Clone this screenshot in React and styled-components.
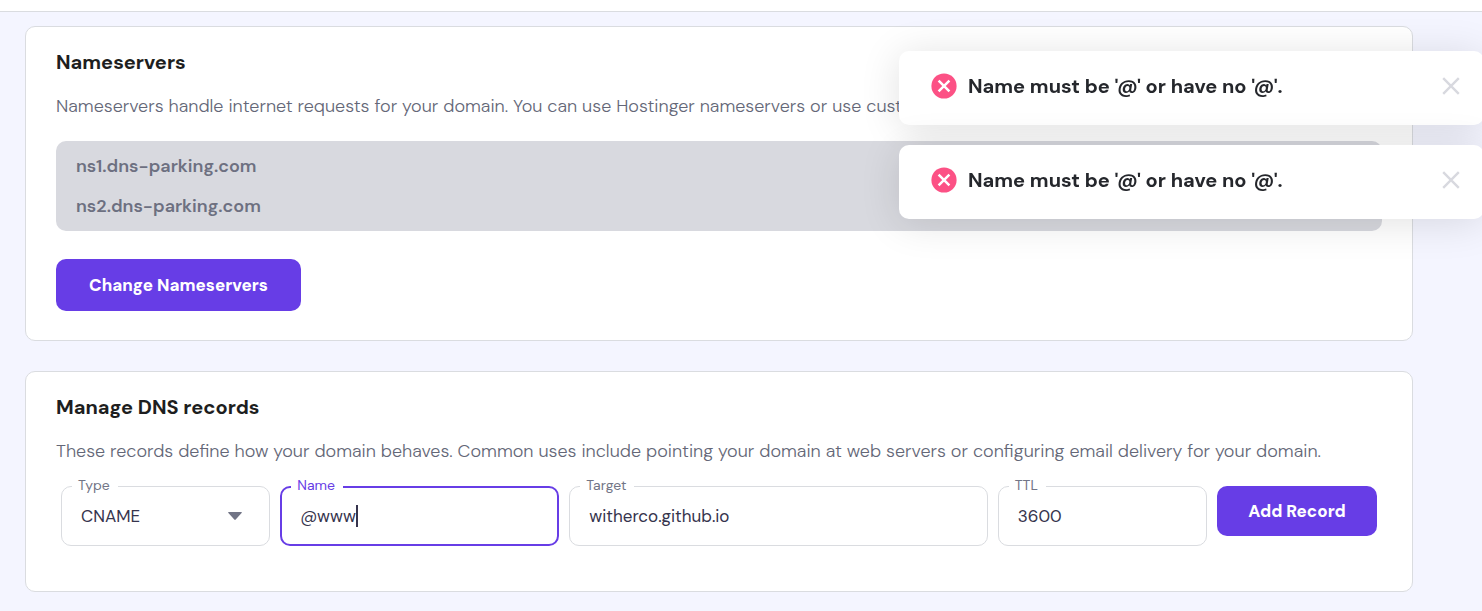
import React from "react";
import styled, { createGlobalStyle } from "styled-components";

const GlobalStyle = createGlobalStyle`
  *, *::before, *::after { box-sizing: border-box; }
  body {
    margin: 0;
    background: #f4f5ff;
    color: #1d1e20;
    font-family: "DM Sans", Inter, "Liberation Sans", sans-serif;
    font-size: 17px;
    overflow-x: hidden;
  }
  button, input, select { font: inherit; color: inherit; }
`;

const TopBar = styled.header`
  height: 12px;
  background: #fff;
  border-bottom: 1px solid #dadce0;
`;

const Page = styled.main`
  display: flex;
  flex-direction: column;
  gap: 30px;
  padding: 14px 69px 19px 25px;
`;

const Card = styled.section`
  background: #fff;
  border: 1px solid #dadce0;
  border-radius: 10px;
  padding: 20px 30px ${(p) => p.$bottom}px;
`;

const Title = styled.h2`
  margin: 0;
  font-size: 20px;
  line-height: 30px;
  font-weight: 700;
`;

const Description = styled.p`
  margin: 17px 0 0;
  font-size: 18px;
  font-weight: 300;
  line-height: 24px;
  color: #646777;
  white-space: ${(p) => (p.$singleLine ? "nowrap" : "normal")};
`;

const ServerList = styled.ul`
  margin: 23px 0 28px;
  padding: 5px 20px;
  list-style: none;
  background: #d8d9df;
  border-radius: 10px;
  color: #6d7081;
  font-size: 18px;
  font-weight: 600;
  line-height: 40px;
`;

const PrimaryButton = styled.button`
  height: ${(p) => p.$height}px;
  padding: 0 20px;
  border: 0;
  border-radius: 10px;
  background: #673de6;
  color: #fff;
  font-size: 17px;
  font-weight: 800;
  white-space: nowrap;
  cursor: pointer;
`;

const ChangeButton = styled(PrimaryButton)`
  min-width: 245px;
`;

const AddButton = styled(PrimaryButton)`
  margin-top: 10px;
`;

const RecordForm = styled.form`
  display: grid;
  grid-template-columns: 3fr 4fr 6fr 3fr 160px;
  gap: 10px;
  align-items: start;
  margin: 13px 5px 0;
`;

const Outline = styled.fieldset`
  display: block;
  min-width: 0;
  height: 70px;
  margin: 0;
  padding: 8px 19px 0 ${(p) => (p.$focused ? 18 : 19)}px;
  border: ${(p) => (p.$focused ? "2px solid #673de6" : "1px solid #dadce0")};
  border-radius: 10px;

  legend {
    margin-left: -9px;
    padding: 0 8px 3px 6px;
    font-size: 14px;
    line-height: 18px;
    color: ${(p) => (p.$focused ? "#673de6" : "#727586")};
  }
`;

const Control = styled.div`
  display: flex;
  align-items: center;
  height: 22px;
  color: #36344d;
`;

const TextInput = styled.input`
  width: 100%;
  min-width: 0;
  height: 22px;
  padding: 0;
  border: 0;
  outline: 0;
  background: transparent;
`;

const ActiveInput = styled(TextInput)`
  width: auto;
  max-width: 100%;
  field-sizing: content;
  caret-color: transparent;
`;

const Caret = styled.span`
  width: 2px;
  height: 22px;
  background: #36344d;
`;

const Select = styled.select`
  flex: 1;
  min-width: 0;
  height: 22px;
  padding: 0;
  border: 0;
  outline: 0;
  background: transparent;
  appearance: none;
`;

const Arrow = styled.svg`
  flex: none;
  margin-right: 8px;
  pointer-events: none;
`;

const ToastStack = styled.div`
  position: fixed;
  top: 51px;
  right: -2px;
  display: flex;
  flex-direction: column;
  gap: 20px;
  width: 585px;
`;

const ToastBox = styled.div`
  display: flex;
  align-items: center;
  height: 74px;
  padding: 0 23px 4px 32px;
  background: #fff;
  border-radius: 10px;
  box-shadow: 0 4px 40px rgba(0, 0, 0, 0.12);
`;

const ToastText = styled.p`
  flex: 1;
  margin: 0 0 0 11px;
  color: #25272c;
  font-size: 20px;
  font-weight: 700;
  line-height: 30px;
`;

const CloseButton = styled.button`
  display: flex;
  padding: 0;
  border: 0;
  background: none;
  cursor: pointer;
`;

function Field({ id, label, focused, children }) {
  return (
    <Outline $focused={focused}>
      <legend>
        <label htmlFor={id}>{label}</label>
      </legend>
      <Control>{children}</Control>
    </Outline>
  );
}

function Toast({ children }) {
  return (
    <ToastBox role="alert">
      <svg width="26" height="26" viewBox="0 0 26 26" aria-hidden="true">
        <circle cx="13" cy="13" r="12.6" fill="#fc5185" />
        <path d="M7.6 7.6 18.4 18.4M18.4 7.6 7.6 18.4" stroke="#fff" strokeWidth="2.5" />
      </svg>
      <ToastText>{children}</ToastText>
      <CloseButton type="button" aria-label="Close">
        <svg width="20" height="20" viewBox="0 0 20 20" aria-hidden="true">
          <path d="M2.2 2.2 17.8 17.8M17.8 2.2 2.2 17.8" stroke="#d8d9df" strokeWidth="2.4" />
        </svg>
      </CloseButton>
    </ToastBox>
  );
}

export default function App() {
  return (
    <>
      <GlobalStyle />
      <TopBar />
      <Page>
        <Card $bottom={29}>
          <Title>Nameservers</Title>
          <Description $singleLine>
            Nameservers handle internet requests for your domain. You can use Hostinger nameservers or use custom
          </Description>
          <ServerList>
            <li>ns1.dns-parking.com</li>
            <li>ns2.dns-parking.com</li>
          </ServerList>
          <ChangeButton type="button" $height={52}>Change Nameservers</ChangeButton>
        </Card>
        <Card $bottom={45}>
          <Title>Manage DNS records</Title>
          <Description>
            These records define how your domain behaves. Common uses include pointing your domain at web servers or
            configuring email delivery for your domain.
          </Description>
          <RecordForm onSubmit={(e) => e.preventDefault()}>
            <Field id="type" label="Type">
              <Select id="type" defaultValue="CNAME">
                <option>CNAME</option>
              </Select>
              <Arrow width="14" height="8" viewBox="0 0 14 8" aria-hidden="true">
                <path d="M0.7 0h12.6q1 0 .3.9L7.7 7.5q-.7.8-1.4 0L.4.9Q-.3 0 .7 0z" fill="#727586" />
              </Arrow>
            </Field>
            <Field id="name" label="Name" focused>
              <ActiveInput id="name" defaultValue="@www" />
              <Caret />
            </Field>
            <Field id="target" label="Target">
              <TextInput id="target" defaultValue="witherco.github.io" />
            </Field>
            <Field id="ttl" label="TTL">
              <TextInput id="ttl" defaultValue="3600" />
            </Field>
            <AddButton type="submit" $height={50}>Add Record</AddButton>
          </RecordForm>
        </Card>
      </Page>
      <ToastStack>
        <Toast>Name must be '@' or have no '@'.</Toast>
        <Toast>Name must be '@' or have no '@'.</Toast>
      </ToastStack>
    </>
  );
}
